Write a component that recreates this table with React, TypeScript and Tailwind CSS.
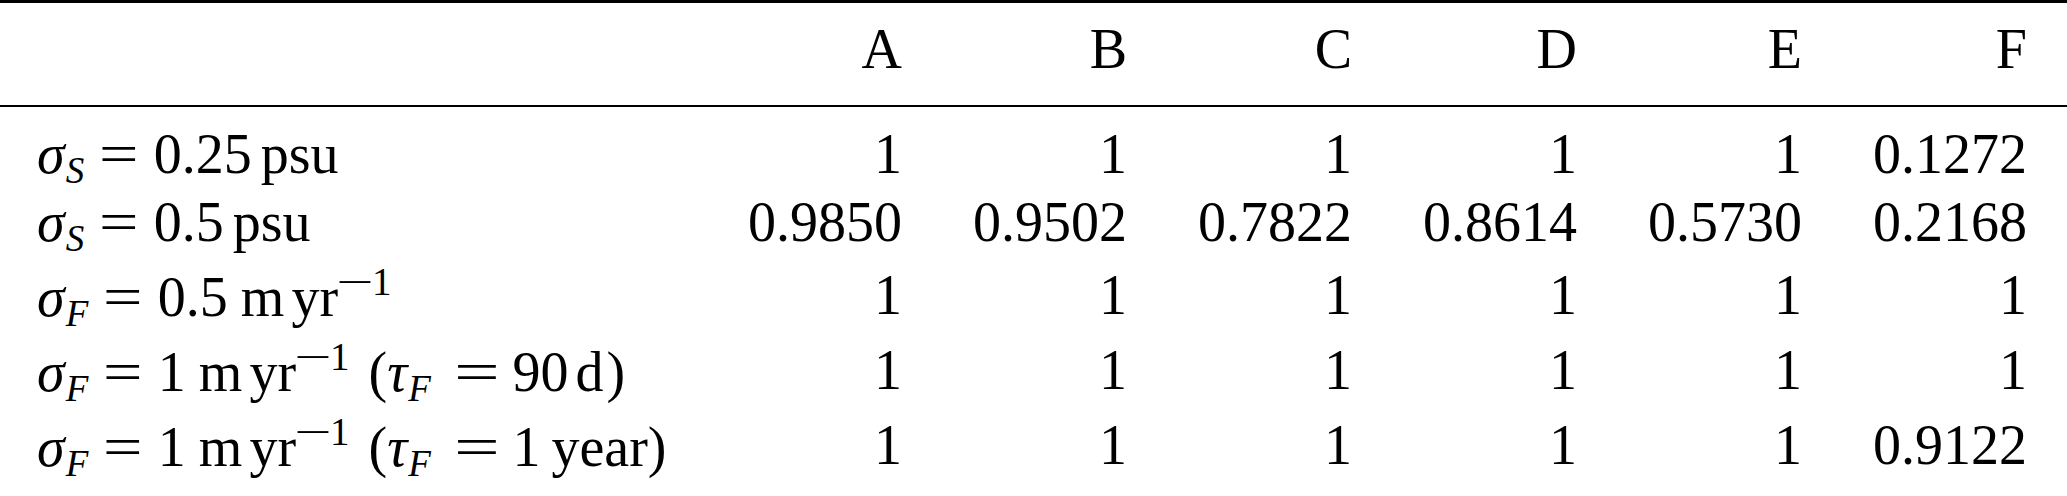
const rowGrid = "grid grid-cols-[1fr_repeat(6,225px)] pl-[37px] pr-[40px] leading-[67px]";

function Sub({ children }: { children: string }) {
  return <span className="italic text-[37px] leading-none align-[-10px] ml-[1px]">{children}</span>;
}

function Sup() {
  return (
    <span className="text-[39px] leading-none align-[21px]">
      <span className="inline-block scale-x-[1.7] mx-[6px]">−</span>1
    </span>
  );
}

// first equals sign, after sigma
function Eq() {
  return <span className="inline-block scale-x-[1.25] ml-[19px] mr-[19px]">=</span>;
}

// equals sign inside the parentheses, a bit wider
function EqWide() {
  return <span className="inline-block scale-x-[1.45] ml-[30px] mr-[20px]">=</span>;
}

function MYr() {
  return (
    <>
      <span className="ml-[13px]">m</span>
      <span className="ml-[7px]">yr</span>
      <Sup />
    </>
  );
}

const rows = [
  {
    label: (
      <>
        <span className="italic">σ</span>
        <Sub>S</Sub>
        <Eq />
        0.25<span className="ml-[9px]">psu</span>
      </>
    ),
    values: ["1", "1", "1", "1", "1", "0.1272"],
    pad: "",
  },
  {
    label: (
      <>
        <span className="italic">σ</span>
        <Sub>S</Sub>
        <Eq />
        0.5<span className="ml-[9px]">psu</span>
      </>
    ),
    values: ["0.9850", "0.9502", "0.7822", "0.8614", "0.5730", "0.2168"],
    pad: "",
  },
  {
    label: (
      <>
        <span className="italic">σ</span>
        <Sub>F</Sub>
        <Eq />
        0.5
        <MYr />
      </>
    ),
    values: ["1", "1", "1", "1", "1", "1"],
    pad: "pt-[5px]",
  },
  {
    label: (
      <>
        <span className="italic">σ</span>
        <Sub>F</Sub>
        <Eq />
        1
        <MYr />
        <span className="ml-[19px]">(</span>
        <span className="italic">τ</span>
        <Sub>F</Sub>
        <EqWide />
        90<span className="ml-[7px]">d</span>
        <span className="ml-[3px]">)</span>
      </>
    ),
    values: ["1", "1", "1", "1", "1", "1"],
    pad: "pt-[5px]",
  },
  {
    label: (
      <>
        <span className="italic">σ</span>
        <Sub>F</Sub>
        <Eq />
        1
        <MYr />
        <span className="ml-[19px]">(</span>
        <span className="italic">τ</span>
        <Sub>F</Sub>
        <EqWide />
        1<span className="ml-[11px]">year)</span>
      </>
    ),
    values: ["1", "1", "1", "1", "1", "0.9122"],
    pad: "pt-[5px]",
  },
];

export default function App() {
  return (
    <div className="w-[2067px] h-[496px] bg-white text-black text-[56px] font-['Liberation_Serif',serif]">
      <div className="border-t-[3px] border-b-[2px] border-black pt-[13px] pb-[22px]">
        <div className={rowGrid}>
          <div />
          {["A", "B", "C", "D", "E", "F"].map((h) => (
            <div key={h} className="text-right">
              {h}
            </div>
          ))}
        </div>
      </div>

      <div className="border-b-[3px] border-black pt-[14px] pb-[16px]">
        {rows.map((r, i) => (
          <div key={i} className={`${rowGrid} ${r.pad}`}>
            <div className="whitespace-nowrap">{r.label}</div>
            {r.values.map((v, j) => (
              <div key={j} className="text-right">
                {v}
              </div>
            ))}
          </div>
        ))}
      </div>
    </div>
  );
}
